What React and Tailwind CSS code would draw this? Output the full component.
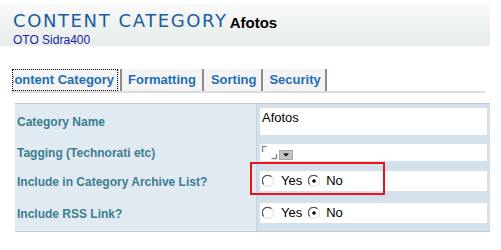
import React from 'react';

function Radio({ checked }) {
  return (
    <svg width="12" height="12" viewBox="0 0 12 12" className="shrink-0">
      <circle cx="6" cy="6" r="5.5" fill="#ffffff" />
      <path d="M1.9 9.5 A5 5 0 0 1 9.5 1.9" stroke="#505050" strokeWidth="1.2" fill="none" />
      <path d="M10.1 2.5 A5 5 0 0 1 2.5 10.1" stroke="#e4e4e4" strokeWidth="1.2" fill="none" />
      {checked ? <circle cx="6" cy="6" r="1.8" fill="#000000" /> : null}
    </svg>
  );
}

function YesNo() {
  return (
    <div className="flex items-center text-[13px] text-black">
      <Radio />
      <span className="ml-[7px]">Yes</span>
      <span className="ml-[6px]"><Radio checked /></span>
      <span className="ml-[6px]">No</span>
    </div>
  );
}

function TagWidget() {
  return (
    <svg width="34" height="15" viewBox="0 0 34 15">
      <path d="M1.5 7 V1.5 H5.5" stroke="#8a8a8a" strokeWidth="1.4" fill="none" />
      <path d="M10.5 13.5 H15.5 V9" stroke="#8a8a8a" strokeWidth="1.4" fill="none" />
      <rect x="18.5" y="5.5" width="13" height="9" fill="#c4c4c4" stroke="#9a9a9a" strokeWidth="0.8" />
      <path d="M22 8.5 H28 L25 11.5 Z" fill="#000000" />
    </svg>
  );
}

const rows = [
  { label: 'Category Name', h: 'h-[35px]', pt: 'pt-[4px]', box: 'h-[27px]' },
  { label: 'Tagging (Technorati etc)', h: 'h-[27px]', pt: 'pt-[5px]', box: 'h-[17px]' },
  { label: 'Include in Category Archive List?', h: 'h-[31px]', pt: 'pt-[5px]', box: 'h-[20px]' },
  { label: 'Include RSS Link?', h: 'h-[34px]', pt: 'pt-[6px]', box: 'h-[20px]' },
];

function RowValue({ i }) {
  if (i === 0) return <div className="pl-[2px] pt-[2px] text-[13px] text-black leading-[15px]">Afotos</div>;
  if (i === 1) return <div className="pl-[1px] pt-[1px]"><TagWidget /></div>;
  return <div className="pl-[2px] h-full flex items-center"><YesNo /></div>;
}

export default function App() {
  return (
    <div className="relative w-[501px] h-[250px] overflow-hidden bg-white font-['Liberation_Sans',Arial,sans-serif]">
      {/* header band */}
      <div className="mt-[4px] w-[490px] h-[42px] bg-gradient-to-b from-[#f8faf9] via-[#eef2f0] to-[#e7edea] pl-[13px] pt-[6px]">
        <div className="flex items-end h-[20px]">
          <span className="font-['DejaVu_Sans',Verdana,sans-serif] text-[18px] leading-[18px] tracking-[1.6px] text-[#1b5ba2]">CONTENT CATEGORY</span>
          <span className="ml-[2px] text-[15px] leading-[15px] font-bold text-black">Afotos</span>
        </div>
        <div className="mt-[4px] text-[12px] leading-[13px] text-[#2222a0]">OTO Sidra400</div>
      </div>

      {/* tabs */}
      <div className="mt-[23px] ml-[12px] w-[473px] border-b-2 border-[#dcdcdc]">
        <div className="flex h-[22px] text-[13px] font-bold text-[#1f6db5]">
          <div className="w-[106px] overflow-hidden bg-[#f4f4f4] border border-dotted border-black flex items-center">
            <span className="-ml-[8px] whitespace-nowrap">Content Category</span>
          </div>
          <div className="w-[4px] border-l border-[#e8e8e8] border-r-2 border-r-[#8c8c8c]" />
          <div className="bg-[#f4f4f4] px-[6px] flex items-center border-r-2 border-[#8c8c8c]">Formatting</div>
          <div className="bg-[#f4f4f4] pl-[7px] pr-[5px] flex items-center border-r-2 border-[#8c8c8c]">Sorting</div>
          <div className="bg-[#f4f4f4] pl-[6px] pr-[4px] flex items-center border-r-2 border-[#8c8c8c]">Security</div>
        </div>
      </div>

      {/* table */}
      <div className="mt-[10px] ml-[15px] w-[475px] border-t border-b border-[#bccbd6]">
        {rows.map((r, i) => (
          <div key={r.label} className={`flex ${r.h}`}>
            <div className="w-[242px] bg-[#e1eaf1] border-r border-[#c6d4df] flex items-center pl-[2px] text-[12px] font-bold text-[#3b7d90]">
              {r.label}
            </div>
            <div className={`flex-1 bg-[#d4e0ea] pl-[3px] pr-[3px] ${r.pt}`}>
              <div className={`bg-white ${r.box}`}>
                <RowValue i={i} />
              </div>
            </div>
          </div>
        ))}
      </div>

      {/* highlight annotation */}
      <div className="absolute left-[250px] top-[162px] w-[135px] h-[33px] border-2 border-[#e8141b]" />
    </div>
  );
}
